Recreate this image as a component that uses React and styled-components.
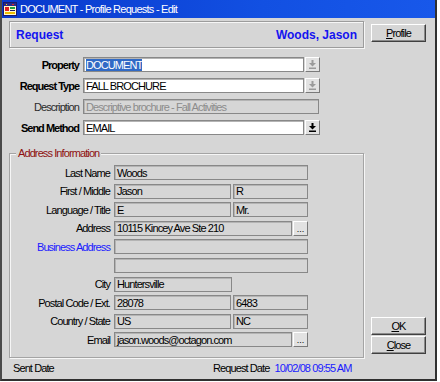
import React from 'react';
import styled, { createGlobalStyle } from 'styled-components';

const FONT = `"Liberation Sans", Arial, sans-serif`;
const BG = '#d6d6d6';
const SIZE = '11px';
const TRACK = '-0.9px';

const Global = createGlobalStyle`
  html, body { margin: 0; padding: 0; background: #ffffff; }
  body { font-family: ${FONT}; font-size: ${SIZE}; letter-spacing: ${TRACK}; color: #000; }
  * { box-sizing: border-box; }
`;

const Window = styled.div`
  width: 437px;
  height: 381px;
  background: ${BG};
  border-left: 2px solid #4a4a4a;
  border-right: 2px solid #303030;
  border-bottom: 2px solid #303030;
  display: flex;
  flex-direction: column;
`;

const TitleBar = styled.div`
  height: 18px;
  flex: none;
  display: flex;
  align-items: center;
  gap: 3px;
  padding-left: 1px;
  background: linear-gradient(90deg, #0838cc 0%, #1250e2 60%, #1858ea 100%);
  color: #ffffff;
  font-size: 11px;
  letter-spacing: -0.75px;
  white-space: nowrap;
`;

const Body = styled.div`
  display: grid;
  grid-template-columns: 355px 55px;
  grid-template-areas: 'main side' 'foot foot';
  column-gap: 7px;
  padding: 3px 0 0 7px;
`;

const Main = styled.div`
  grid-area: main;
  display: flex;
  flex-direction: column;
`;

const Side = styled.div`
  grid-area: side;
  display: flex;
  flex-direction: column;
  justify-content: space-between;
  padding: 3px 0 4px;
`;

const ButtonStack = styled.div`
  display: flex;
  flex-direction: column;
  gap: 1px;
`;

const HeaderBox = styled.div`
  height: 27px;
  display: flex;
  align-items: center;
  justify-content: space-between;
  padding: 0 6px;
  border: 1px solid #9c9c9c;
  box-shadow: inset 1px 1px 0 #f6f6f6, 1px 1px 0 #f6f6f6;
  font-size: 12px;
  letter-spacing: 0;
  font-weight: bold;
  color: #1414f0;
`;

const PushButton = styled.button`
  width: 55px;
  height: 18px;
  padding: 0;
  margin: 0;
  background: ${BG};
  border: 1px solid;
  border-color: #ffffff #404040 #404040 #ffffff;
  box-shadow: inset -1px -1px 0 #8a8a8a;
  font-family: ${FONT};
  font-size: ${SIZE};
  letter-spacing: ${TRACK};
  color: #000;
  display: flex;
  align-items: center;
  justify-content: center;
`;

const TopForm = styled.div`
  margin-top: 9px;
  display: grid;
  grid-template-columns: 74px 222px 15px;
  grid-auto-rows: 15px;
  row-gap: 6px;
`;

const Label = styled.div`
  display: flex;
  align-items: center;
  justify-content: flex-end;
  padding-right: 4px;
  white-space: nowrap;
  font-weight: ${(p) => (p.$bold ? 'bold' : 'normal')};
  letter-spacing: ${(p) => (p.$bold ? '-1px' : TRACK)};
  color: ${(p) => (p.$link ? '#1a1aff' : p.$muted ? '#2a2a2a' : '#000')};
`;

const Field = styled.div`
  height: 15px;
  width: ${(p) => (p.$w ? `${p.$w}px` : '100%')};
  flex: none;
  grid-column: ${(p) => (p.$span ? 'span 2' : 'auto')};
  display: flex;
  align-items: center;
  padding-left: 2px;
  border: 1px solid #888888;
  box-shadow: inset 1px 1px 0 #b4b4b4;
  background: ${(p) => (p.$white ? '#ffffff' : BG)};
  color: ${(p) => (p.$dim ? '#8c8c8c' : '#000')};
  white-space: nowrap;
  overflow: hidden;
`;

const Selected = styled.span`
  background: #316ac5;
  color: #ffffff;
`;

const SmallButton = styled.div`
  width: 15px;
  height: 15px;
  flex: none;
  display: flex;
  align-items: ${(p) => (p.$dots ? 'flex-end' : 'center')};
  justify-content: center;
  background: #e2e2e2;
  border: 1px solid;
  border-color: #ffffff #7a7a7a #7a7a7a #ffffff;
  font-size: 9px;
  letter-spacing: 0;
  line-height: 8px;
  padding-bottom: ${(p) => (p.$dots ? '2px' : '0')};
`;

const GroupBox = styled.fieldset`
  margin: 12px 0 0;
  padding: 5px 0 10px 9px;
  border: 1px solid #a4a4a4;
  box-shadow: inset 1px 1px 0 #f6f6f6, 1px 1px 0 #f6f6f6;
  min-width: 0;
`;

const Legend = styled.legend`
  margin-left: -3px;
  padding: 0 2px;
  color: #8e1010;
  line-height: 13px;
  background: ${BG};
`;

const AddrForm = styled.div`
  display: grid;
  grid-template-columns: 95px 194px;
  grid-auto-rows: 15px;
  row-gap: 3.6px;
`;

const Pair = styled.div`
  display: flex;
  gap: ${(p) => (p.$gap != null ? p.$gap : 2)}px;
`;

const Footer = styled.div`
  grid-area: foot;
  height: 20px;
  display: flex;
  align-items: center;
  padding-left: 4px;
`;

const FootCell = styled.span`
  width: ${(p) => (p.$w ? `${p.$w}px` : 'auto')};
  color: ${(p) => (p.$blue ? '#1a1aff' : '#000')};
  margin-left: ${(p) => (p.$ml ? `${p.$ml}px` : '0')};
  white-space: nowrap;
`;

const AppIcon = () => (
  <svg width="14" height="14" viewBox="0 0 14 14">
    <rect x="0.5" y="0.5" width="13" height="13" fill="#fff8d0" stroke="#1a1a6a" />
    <rect x="1" y="1" width="12" height="3" fill="#2a2a8a" />
    <rect x="2" y="5" width="4" height="4" fill="#e02020" />
    <rect x="7" y="5" width="5" height="2" fill="#20a040" />
    <rect x="7" y="8" width="5" height="1" fill="#1a1a6a" />
    <rect x="2" y="10" width="10" height="2" fill="#f0c000" />
    <rect x="3" y="2" width="1" height="1" fill="#ffd000" />
    <rect x="9" y="2" width="2" height="1" fill="#e02020" />
  </svg>
);

const DropArrow = ({ color }) => (
  <svg width="7" height="9" viewBox="0 0 7 9">
    <rect x="2.5" y="0" width="2" height="3" fill={color} />
    <polygon points="0,3 7,3 3.5,6.5" fill={color} />
    <rect x="0" y="7.5" width="7" height="1.5" fill={color} />
  </svg>
);

const Dots = () => <span>...</span>;

export default function App() {
  return (
    <>
      <Global />
      <Window>
        <TitleBar>
          <AppIcon />
          <span>DOCUMENT - Profile Requests - Edit</span>
        </TitleBar>
        <Body>
          <Main>
            <HeaderBox>
              <span>Request</span>
              <span>Woods, Jason</span>
            </HeaderBox>

            <TopForm>
              <Label $bold>Property</Label>
              <Field $white $w={221}>
                <Selected>DOCUMENT</Selected>
              </Field>
              <SmallButton>
                <DropArrow color="#9a9a9a" />
              </SmallButton>

              <Label $bold>Request Type</Label>
              <Field $white $w={221}>FALL BROCHURE</Field>
              <SmallButton>
                <DropArrow color="#9a9a9a" />
              </SmallButton>

              <Label $muted>Description</Label>
              <Field $span $dim $w={236}>Descriptive brochure - Fall Activities</Field>

              <Label $bold>Send Method</Label>
              <Field $white $w={221}>EMAIL</Field>
              <SmallButton>
                <DropArrow color="#000000" />
              </SmallButton>
            </TopForm>

            <GroupBox>
              <Legend>Address Information</Legend>
              <AddrForm>
                <Label>Last Name</Label>
                <Field>Woods</Field>

                <Label>First / Middle</Label>
                <Pair>
                  <Field $w={117}>Jason</Field>
                  <Field $w={75}>R</Field>
                </Pair>

                <Label>Language / Title</Label>
                <Pair>
                  <Field $w={117}>E</Field>
                  <Field $w={75}>Mr.</Field>
                </Pair>

                <Label>Address</Label>
                <Pair $gap={1}>
                  <Field $w={178}>10115 Kincey Ave Ste 210</Field>
                  <SmallButton $dots>
                    <Dots />
                  </SmallButton>
                </Pair>

                <Label $link>Business Address</Label>
                <Field />

                <Label />
                <Field />

                <Label>City</Label>
                <Field $w={118}>Huntersville</Field>

                <Label>Postal Code / Ext.</Label>
                <Pair>
                  <Field $w={117}>28078</Field>
                  <Field $w={75}>6483</Field>
                </Pair>

                <Label>Country / State</Label>
                <Pair>
                  <Field $w={117}>US</Field>
                  <Field $w={75}>NC</Field>
                </Pair>

                <Label>Email</Label>
                <Pair $gap={1}>
                  <Field $w={178}>jason.woods@octagon.com</Field>
                  <SmallButton $dots>
                    <Dots />
                  </SmallButton>
                </Pair>
              </AddrForm>
            </GroupBox>
          </Main>

          <Side>
            <PushButton>
              <span>
                <u>P</u>rofile
              </span>
            </PushButton>
            <ButtonStack>
              <PushButton>
                <span>
                  <u>O</u>K
                </span>
              </PushButton>
              <PushButton>
                <span>
                  <u>C</u>lose
                </span>
              </PushButton>
            </ButtonStack>
          </Side>

          <Footer>
            <FootCell $w={200}>Sent Date</FootCell>
            <FootCell>Request Date</FootCell>
            <FootCell $blue $ml={5}>10/02/08 09:55 AM</FootCell>
          </Footer>
        </Body>
      </Window>
    </>
  );
}
